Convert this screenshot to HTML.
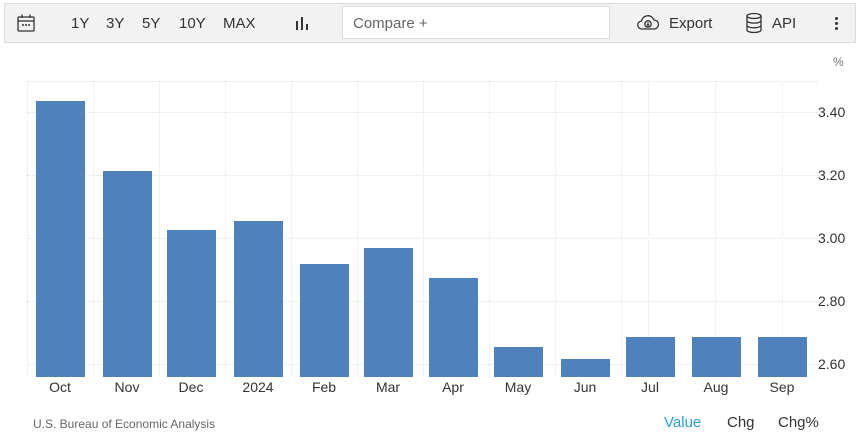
<!DOCTYPE html><html><head><style>
body{margin:0;width:860px;height:442px;background:#fff;font-family:"Liberation Sans",sans-serif;position:relative;overflow:hidden}
.tb{position:absolute;left:4px;top:3px;width:852px;height:40px;background:#f2f2f2;border:1px solid #ddd;box-sizing:border-box}
.t{position:absolute;font-size:15px;color:#333;top:15px}
.cmp{position:absolute;left:342px;top:6px;width:268px;height:33px;background:#fff;border:1px solid #ddd;box-sizing:border-box;font-size:15px;color:#666;padding:8px 10px}
.bar{position:absolute;background:#4f81bd;width:49px;bottom:65px}
.xl{position:absolute;top:379px;font-size:14px;color:#333;width:66px;text-align:center}
.yl{position:absolute;left:818px;font-size:14px;color:#333}
.hg{position:absolute;left:27px;width:790px;border-top:1px dotted #e2e2e2;height:0}
.vg{position:absolute;top:81px;height:296px;border-left:1px dotted #e8e8e8;width:0}
</style></head><body>
<div class="tb"></div>
<svg style="position:absolute;left:16px;top:13px" width="20" height="20" viewBox="0 0 20 20" fill="none" stroke="#333" stroke-width="1.3"><rect x="2" y="4" width="16" height="14" rx="1"/><line x1="2" y1="8" x2="18" y2="8"/><line x1="6" y1="1.5" x2="6" y2="5"/><line x1="14" y1="1.5" x2="14" y2="5"/><circle cx="7" cy="12" r=".4"/><circle cx="10" cy="12" r=".4"/><circle cx="13" cy="12" r=".4"/></svg>
<div class="t" style="left:71px">1Y</div><div class="t" style="left:106px">3Y</div><div class="t" style="left:142px">5Y</div><div class="t" style="left:179px">10Y</div><div class="t" style="left:223px">MAX</div>
<svg style="position:absolute;left:295px;top:15px" width="16" height="16"><rect x="1" y="6" width="2" height="9" fill="#333"/><rect x="6" y="2" width="2" height="13" fill="#333"/><rect x="11" y="9" width="2" height="6" fill="#333"/></svg>
<div class="cmp">Compare +</div>
<svg style="position:absolute;left:636px;top:13px" width="24" height="18" viewBox="0 0 24 18" fill="none" stroke="#333" stroke-width="1.3"><path d="M6 16H18a4.5 4.5 0 0 0 0-9 6.5 6.5 0 0 0-12.5 1A4 4 0 0 0 6 16z"/><circle cx="12" cy="11" r="3.2"/><path d="M12 9v3.5M10.7 11.5l1.3 1.3 1.3-1.3" stroke-width="1"/></svg>
<div class="t" style="left:669px">Export</div>
<svg style="position:absolute;left:745px;top:12px" width="18" height="22" viewBox="0 0 18 22" fill="none" stroke="#333" stroke-width="1.3"><ellipse cx="9" cy="4" rx="7" ry="2.5"/><path d="M2 4v14c0 1.4 3 2.5 7 2.5s7-1.1 7-2.5V4M2 8.6c0 1.4 3 2.5 7 2.5s7-1.1 7-2.5M2 13.3c0 1.4 3 2.5 7 2.5s7-1.1 7-2.5"/></svg>
<div class="t" style="left:772px">API</div>
<div style="position:absolute;left:835px;top:17px;width:3px"><div style="width:3px;height:3px;background:#333;border-radius:50%;margin-bottom:2px"></div><div style="width:3px;height:3px;background:#333;border-radius:50%;margin-bottom:2px"></div><div style="width:3px;height:3px;background:#333;border-radius:50%"></div></div>
<div style="position:absolute;left:833px;top:55px;font-size:12px;color:#777">%</div>
<div class="hg" style="top:81px"></div><div class="hg" style="top:112px"></div><div class="hg" style="top:175px"></div><div class="hg" style="top:238px"></div><div class="hg" style="top:301px"></div><div class="hg" style="top:364px"></div>
<div class="vg" style="left:27px"></div><div class="vg" style="left:93px"></div><div class="vg" style="left:159px"></div><div class="vg" style="left:225px"></div><div class="vg" style="left:291px"></div><div class="vg" style="left:357px"></div><div class="vg" style="left:423px"></div><div class="vg" style="left:489px"></div><div class="vg" style="left:555px"></div><div class="vg" style="left:621px"></div><div class="vg" style="left:648px"></div><div class="vg" style="left:715px"></div><div class="vg" style="left:782px"></div>
<div class="yl" style="top:104px">3.40</div><div class="yl" style="top:167px">3.20</div><div class="yl" style="top:230px">3.00</div><div class="yl" style="top:293px">2.80</div><div class="yl" style="top:356px">2.60</div>
<div class="bar" style="left:36px;top:101px"></div>
<div class="bar" style="left:103px;top:171px"></div>
<div class="bar" style="left:167px;top:230px"></div>
<div class="bar" style="left:234px;top:221px"></div>
<div class="bar" style="left:300px;top:264px"></div>
<div class="bar" style="left:364px;top:248px"></div>
<div class="bar" style="left:429px;top:278px"></div>
<div class="bar" style="left:494px;top:347px"></div>
<div class="bar" style="left:561px;top:359px"></div>
<div class="bar" style="left:626px;top:337px"></div>
<div class="bar" style="left:692px;top:337px"></div>
<div class="bar" style="left:758px;top:337px"></div>
<div class="xl" style="left:27px">Oct</div><div class="xl" style="left:94px">Nov</div><div class="xl" style="left:158px">Dec</div><div class="xl" style="left:225px">2024</div><div class="xl" style="left:291px">Feb</div><div class="xl" style="left:355px">Mar</div><div class="xl" style="left:420px">Apr</div><div class="xl" style="left:485px">May</div><div class="xl" style="left:552px">Jun</div><div class="xl" style="left:617px">Jul</div><div class="xl" style="left:683px">Aug</div><div class="xl" style="left:749px">Sep</div>
<div style="position:absolute;left:33px;top:417px;font-size:12px;color:#666">U.S. Bureau of Economic Analysis</div>
<div style="position:absolute;left:664px;top:414px;font-size:15px;color:#2a9fd8">Value</div>
<div style="position:absolute;left:727px;top:414px;font-size:15px;color:#333">Chg</div>
<div style="position:absolute;left:778px;top:414px;font-size:15px;color:#333">Chg%</div>
</body></html>
